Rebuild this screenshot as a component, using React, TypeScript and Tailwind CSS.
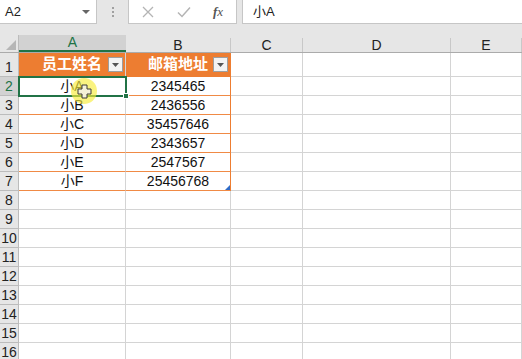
import React from "react";

const cols = [
  { key: "A", w: "w-[107px]" },
  { key: "B", w: "w-[105px]" },
  { key: "C", w: "w-[72px]" },
  { key: "D", w: "w-[148px]" },
  { key: "E", w: "flex-1" },
];

const data = [
  ["小A", "2345465"],
  ["小B", "2436556"],
  ["小C", "35457646"],
  ["小D", "2343657"],
  ["小E", "2547567"],
  ["小F", "25456768"],
];

const font = { fontFamily: '"Liberation Sans", "Noto Sans CJK SC", sans-serif' };

function FilterButton() {
  return (
    <div className="absolute right-[2px] top-[4px] w-[15px] h-[15px] bg-[#f3f3f3] border border-[#9e9e9e] flex items-center justify-center">
      <svg width="7" height="4" viewBox="0 0 7 4">
        <path d="M0 0h7L3.5 4z" fill="#555" />
      </svg>
    </div>
  );
}

function FormulaBar() {
  return (
    <div className="flex h-[24px] bg-[#e6e6e6]">
      <div className="w-[97px] bg-white border-r border-b border-[#c6c6c6] flex items-center justify-between pl-[5px] pr-[6px] text-[13px] text-[#222]">
        <span>A2</span>
        <svg width="8" height="4" viewBox="0 0 8 4">
          <path d="M0 0h8L4 4z" fill="#666" />
        </svg>
      </div>
      <div className="w-[31px] flex flex-col items-center justify-center gap-[2px]">
        <div className="w-[2px] h-[2px] bg-[#a0a0a0]" />
        <div className="w-[2px] h-[2px] bg-[#a0a0a0]" />
        <div className="w-[2px] h-[2px] bg-[#a0a0a0]" />
      </div>
      <div className="w-[109px] bg-white border-x border-b border-[#c6c6c6] flex items-center pl-[13px]">
        <svg width="12" height="12" viewBox="0 0 12 12" className="mr-[23px]">
          <path d="M1 1L11 11M11 1L1 11" stroke="#b4b4b4" strokeWidth="1.3" />
        </svg>
        <svg width="14" height="12" viewBox="0 0 14 12" className="mr-[22px]">
          <path d="M1 6.5L5 10.5L13 1.5" stroke="#b4b4b4" strokeWidth="1.5" fill="none" />
        </svg>
        <span className="italic text-[13px] text-[#555]" style={{ fontFamily: '"Liberation Serif", serif' }}>
          <span className="font-bold">f</span>x
        </span>
      </div>
      <div className="w-[5px]" />
      <div className="flex-1 bg-white border-l border-b border-[#c6c6c6] flex items-center pl-[10px] text-[13px] text-[#222]">
        小A
      </div>
    </div>
  );
}

function ColumnHeaders() {
  return (
    <div className="flex h-[18px] bg-[#e6e6e6] border-b border-[#ababab]">
      <div className="w-[19px] border-r border-[#bcbcbc] relative">
        <svg width="10" height="10" viewBox="0 0 10 10" className="absolute right-[2px] bottom-[2px]">
          <path d="M10 0V10H0z" fill="#b6b6b6" />
        </svg>
      </div>
      {cols.map((c) => (
        <div
          key={c.key}
          className={`${c.w} flex items-center justify-center text-[14px] ${
            c.key === "A"
              ? "bg-[#d2d2d2] text-[#217346] border-b-2 border-[#217346]"
              : "text-[#222] border-r border-[#c8c8c8] mt-[3px]"
          }`}
        >
          {c.key}
        </div>
      ))}
    </div>
  );
}

function Row({ n }: { n: number }) {
  const inTable = n <= 7;
  const isHeader = n === 1;
  const rowData = n >= 2 && n <= 7 ? data[n - 2] : null;
  const selected = n === 2;
  return (
    <div className={`flex ${isHeader ? "h-[24px]" : "h-[19px]"}`}>
      <div
        className={`w-[19px] shrink-0 border-r border-b border-[#bcbcbc] flex items-end justify-center text-[14px] leading-[17px] overflow-visible whitespace-nowrap ${
          selected ? "bg-[#d2d2d2] text-[#217346]" : "bg-[#e6e6e6] text-[#222]"
        }`}
      >
        {n}
      </div>
      {cols.map((c, i) => {
        const tableCell = inTable && i < 2;
        let cls = `${c.w} relative flex items-center justify-center border-b border-r `;
        if (tableCell) {
          cls += isHeader ? "bg-[#ed7d31] border-b-[#ed7d31] " : "bg-white border-b-[#f08a45] ";
          cls += i === 1 ? "border-r-[#ed7d31] " : "border-r-[#d4d4d4] ";
        } else {
          cls += "bg-white border-[#d4d4d4] ";
        }
        return (
          <div key={c.key} className={cls}>
            {isHeader && i === 0 && (
              <>
                <span className="text-white font-bold text-[15px]">员工姓名</span>
                <FilterButton />
              </>
            )}
            {isHeader && i === 1 && (
              <>
                <span className="text-white font-bold text-[15px]">邮箱地址</span>
                <FilterButton />
              </>
            )}
            {rowData && i < 2 && (
              <span className="text-[14px] text-[#111] leading-none">{rowData[i]}</span>
            )}
            {n === 7 && i === 1 && (
              <svg width="5" height="5" viewBox="0 0 5 5" className="absolute right-0 bottom-0">
                <path d="M5 0V5H0z" fill="#2f6bc7" />
              </svg>
            )}
          </div>
        );
      })}
    </div>
  );
}

export default function App() {
  const rows = Array.from({ length: 16 }, (_, i) => i + 1);
  return (
    <div className="w-[522px] h-[359px] overflow-hidden bg-white relative select-none" style={font}>
      <FormulaBar />
      <div className="h-[11px] bg-[#e6e6e6]" />
      <ColumnHeaders />
      <div className="relative">
        {rows.map((n) => (
          <Row key={n} n={n} />
        ))}

        {/* selected cell A2 */}
        <div className="absolute left-[18px] top-[23px] w-[109px] h-[21px] border-2 border-[#217346] pointer-events-none" />
        <div className="absolute left-[123px] top-[40px] w-[6px] h-[6px] bg-[#217346] border border-white" />

        {/* cursor highlight */}
        <div className="absolute left-[71px] top-[25px] w-[26px] h-[26px] rounded-full bg-[#f7ec3c]/65" />
        <svg width="15" height="15" viewBox="0 0 15 15" className="absolute left-[77px] top-[31px]">
          <path
            d="M5 1H10V5H14V10H10V14H5V10H1V5H5Z"
            fill="#f4f1d8"
            stroke="#3a3a3a"
            strokeWidth="1"
          />
        </svg>
      </div>
    </div>
  );
}
